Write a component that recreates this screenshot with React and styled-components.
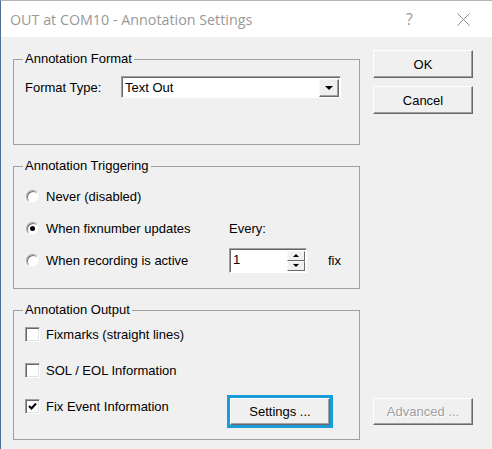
import styled, { createGlobalStyle } from "styled-components";

const GlobalStyle = createGlobalStyle`
  html, body {
    margin: 0;
    padding: 0;
    background: #f0f0f0;
  }
  * {
    box-sizing: border-box;
  }
`;

const Window = styled.div`
  width: 492px;
  height: 449px;
  background: #f0f0f0;
  border-left: 1px solid #4b6f94;
  border-top: 1px solid #b4b4b4;
  font-family: "Liberation Sans", Arial, sans-serif;
  font-size: 13px;
  color: #000;
  display: flex;
  flex-direction: column;
  overflow: hidden;
`;

const TitleBar = styled.div`
  height: 36px;
  background: #fff;
  display: flex;
  align-items: center;
  padding-left: 9px;
`;

const Title = styled.div`
  flex: 1;
  font-family: "Open Sans", "Noto Sans", sans-serif;
  font-size: 14.3px;
  color: #999;
  margin-top: 1px;
`;

const TitleButtons = styled.div`
  display: flex;
  align-items: center;
  gap: 44px;
  padding-right: 22px;
`;

const HelpGlyph = styled.span`
  font-family: "Open Sans", "Noto Sans", sans-serif;
  font-size: 16px;
  color: #9a9a9a;
`;

const Body = styled.div`
  flex: 1;
  display: flex;
  gap: 13px;
  padding: 22px 0 8px 12px;
`;

const LeftColumn = styled.div`
  width: 347px;
  display: flex;
  flex-direction: column;
  gap: 21px;
`;

const RightColumn = styled.div`
  width: 100px;
  display: flex;
  flex-direction: column;
  gap: 8px;
  padding: 13px 0 16px;
  margin-top: -22px;
`;

const Group = styled.div`
  position: relative;
  height: ${(p) => p.$height}px;
  border: 1px solid #a0a0a0;
  padding: ${(p) => p.$pad};
`;

const Caption = styled.span`
  position: absolute;
  top: -9px;
  left: 9px;
  padding: 0 2px;
  background: #f0f0f0;
  line-height: 16px;
`;

const FormatRow = styled.div`
  display: flex;
  align-items: center;
`;

const FieldLabel = styled.span`
  width: 96px;
`;

const Combo = styled.div`
  width: 220px;
  height: 22px;
  background: #fff;
  border: 1px solid;
  border-color: #a0a0a0 #fff #fff #a0a0a0;
  box-shadow: inset 1px 1px #696969;
  display: flex;
  align-items: center;
  justify-content: space-between;
  padding: 1px 1px 0 3px;
`;

const DropButton = styled.div`
  width: 20px;
  height: 18px;
  background: #f0f0f0;
  border: 1px solid;
  border-color: #f8f8f8 #696969 #696969 #f8f8f8;
  box-shadow: inset -1px -1px #a0a0a0;
  display: flex;
  align-items: center;
  justify-content: center;
`;

const Arrow = styled.span`
  width: 0;
  height: 0;
  border-left: ${(p) => p.$size}px solid transparent;
  border-right: ${(p) => p.$size}px solid transparent;
  ${(p) => (p.$up ? "border-bottom" : "border-top")}: ${(p) => p.$size}px solid #000;
`;

const TriggerGrid = styled.div`
  display: grid;
  grid-template-columns: 203px 99px auto;
  grid-auto-rows: 32px;
  align-items: center;
`;

const OutputGrid = styled.div`
  display: grid;
  grid-template-columns: 205px auto;
  grid-auto-rows: 36px;
  align-items: center;
`;

const Option = styled.label`
  display: flex;
  align-items: center;
  gap: ${(p) => p.$gap}px;
  grid-column: ${(p) => p.$span || "auto"};
  white-space: nowrap;
`;

const Radio = styled.span`
  width: 13px;
  height: 13px;
  border-radius: 50%;
  background: #fff;
  border: 1px solid;
  border-color: #a0a0a0 #f4f4f4 #f4f4f4 #a0a0a0;
  box-shadow: inset 1px 1px #7a7a7a;
  display: flex;
  align-items: center;
  justify-content: center;

  &::after {
    content: "";
    width: 5px;
    height: 5px;
    border-radius: 50%;
    background: ${(p) => (p.$checked ? "#000" : "transparent")};
  }
`;

const Checkbox = styled.span`
  width: 15px;
  height: 15px;
  background: #fff;
  border: 1px solid;
  border-color: #a0a0a0 #fff #fff #a0a0a0;
  box-shadow: inset 1px 1px #696969, inset -1px -1px #e3e3e3;
  display: flex;
  align-items: center;
  justify-content: center;
`;

const Spin = styled.div`
  width: 78px;
  height: 25px;
  background: #fff;
  border: 1px solid;
  border-color: #a0a0a0 #fff #fff #a0a0a0;
  box-shadow: inset 1px 1px #696969;
  display: flex;
  padding: 2px 1px 1px 3px;
`;

const SpinValue = styled.span`
  flex: 1;
  line-height: 17px;
`;

const SpinButtons = styled.div`
  width: 18px;
  display: flex;
  flex-direction: column;
`;

const SpinButton = styled.div`
  flex: 1;
  background: #f0f0f0;
  border: 1px solid;
  border-color: #f8f8f8 #696969 #696969 #f8f8f8;
  display: flex;
  align-items: center;
  justify-content: center;
`;

const Button = styled.div`
  width: 100px;
  height: ${(p) => p.$h || 28}px;
  background: #f0f0f0;
  border: 1px solid;
  border-color: #fff #696969 #696969 #fff;
  box-shadow: inset -1px -1px #a0a0a0;
  display: flex;
  align-items: center;
  justify-content: center;
  color: ${(p) => (p.$disabled ? "#a0a0a0" : "#000")};
  text-shadow: ${(p) => (p.$disabled ? "1px 1px #fff" : "none")};
  outline: ${(p) => (p.$focused ? "3px solid #1a9cd8" : "none")};
  margin-top: ${(p) => p.$mt || 0};
`;

const CloseIcon = () => (
  <svg width="13" height="13" viewBox="0 0 13 13">
    <path d="M0.5 0.5 L12.5 12.5 M12.5 0.5 L0.5 12.5" stroke="#8c8c8c" strokeWidth="1" fill="none" />
  </svg>
);

const Check = () => (
  <svg width="9" height="9" viewBox="0 0 9 9">
    <path d="M1 4 L3.5 6.5 L8 1.5" stroke="#000" strokeWidth="2" fill="none" />
  </svg>
);

export default function App() {
  return (
    <>
      <GlobalStyle />
      <Window>
        <TitleBar>
          <Title>OUT at COM10 - Annotation Settings</Title>
          <TitleButtons>
            <HelpGlyph>?</HelpGlyph>
            <CloseIcon />
          </TitleButtons>
        </TitleBar>
        <Body>
          <LeftColumn>
            <Group $height={86} $pad="16px 0 0 11px">
              <Caption>Annotation Format</Caption>
              <FormatRow>
                <FieldLabel>Format Type:</FieldLabel>
                <Combo>
                  <span>Text Out</span>
                  <DropButton>
                    <Arrow $size={4} />
                  </DropButton>
                </Combo>
              </FormatRow>
            </Group>

            <Group $height={123} $pad="13px 0 0 12px">
              <Caption>Annotation Triggering</Caption>
              <TriggerGrid>
                <Option $gap={7} $span="1 / 4">
                  <Radio />
                  Never (disabled)
                </Option>
                <Option $gap={7}>
                  <Radio $checked />
                  When fixnumber updates
                </Option>
                <span>Every:</span>
                <span />
                <Option $gap={7}>
                  <Radio />
                  When recording is active
                </Option>
                <Spin>
                  <SpinValue>1</SpinValue>
                  <SpinButtons>
                    <SpinButton>
                      <Arrow $size={3} $up />
                    </SpinButton>
                    <SpinButton>
                      <Arrow $size={3} />
                    </SpinButton>
                  </SpinButtons>
                </Spin>
                <span>fix</span>
              </TriggerGrid>
            </Group>

            <Group $height={130} $pad="5px 0 0 11px">
              <Caption>Annotation Output</Caption>
              <OutputGrid>
                <Option $gap={6} $span="1 / 3">
                  <Checkbox />
                  Fixmarks (straight lines)
                </Option>
                <Option $gap={6} $span="1 / 3">
                  <Checkbox />
                  SOL / EOL Information
                </Option>
                <Option $gap={6}>
                  <Checkbox>
                    <Check />
                  </Checkbox>
                  Fix Event Information
                </Option>
                <Button $h={27} $focused $mt="10px">
                  Settings ...
                </Button>
              </OutputGrid>
            </Group>
          </LeftColumn>

          <RightColumn>
            <Button>OK</Button>
            <Button>Cancel</Button>
            <Button $h={27} $disabled $mt="auto">
              Advanced ...
            </Button>
          </RightColumn>
        </Body>
      </Window>
    </>
  );
}
